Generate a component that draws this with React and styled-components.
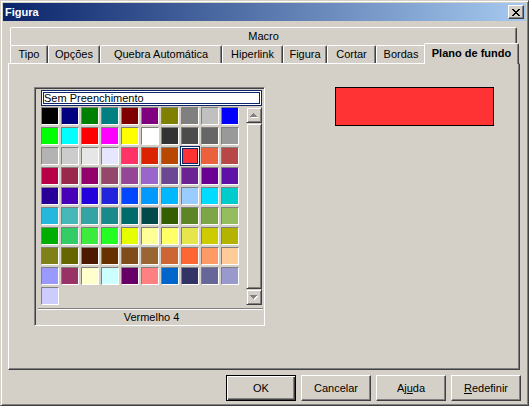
import React from 'react';
import styled, { createGlobalStyle } from 'styled-components';

const Global = createGlobalStyle`
  html, body { margin: 0; padding: 0; background: #d4d0c8; }
  body { font-family: "Liberation Sans", Arial, sans-serif; font-size: 11px; color: #000; }
`;

const FACE = '#d4d0c8';
const NAVY = '#0a246a';

const Window = styled.div`
  width: 529px;
  height: 406px;
  box-sizing: border-box;
  background: ${FACE};
  border: 1px solid;
  border-color: ${FACE} #404040 #404040 ${FACE};
  box-shadow: inset 1px 1px #fff, inset -1px -1px #808080;
  padding: 2px;
  display: flex;
  flex-direction: column;
`;

const TitleBar = styled.div`
  flex: none;
  height: 18px;
  display: flex;
  align-items: center;
  padding-left: 2px;
  background: linear-gradient(to right, #0a246a, #a6caf0);
`;

const Title = styled.span`
  color: #fff;
  font-weight: bold;
  font-size: 11px;
`;

const CloseButton = styled.div`
  margin-left: auto;
  margin-right: 2px;
  width: 16px;
  height: 14px;
  box-sizing: border-box;
  background: ${FACE};
  border: 1px solid;
  border-color: #fff #404040 #404040 #fff;
  box-shadow: inset -1px -1px #808080;
  display: flex;
  align-items: center;
  justify-content: center;
`;

const TabStrip = styled.div`
  margin-top: 6px;
  margin-left: 5px;
  display: flex;
  flex-direction: column;
`;

const TabRow = styled.div`
  display: flex;
  align-items: flex-start;
  height: 18px;
  padding-left: 2px;
`;

const Tab = styled.div`
  flex: none;
  box-sizing: border-box;
  width: ${p => p.$w}px;
  height: 18px;
  border: 1px solid;
  border-bottom: none;
  border-color: #fff #404040 transparent #fff;
  border-radius: 2px 2px 0 0;
  box-shadow: inset -1px 0 #808080;
  background: ${FACE};
  text-align: center;
  line-height: 17px;
  white-space: nowrap;
`;

const ActiveTab = styled(Tab)`
  position: relative;
  z-index: 1;
  width: ${p => p.$w + 4}px;
  height: 21px;
  margin: -2px -2px 0 -2px;
  padding-top: 1px;
  font-weight: bold;
`;

const Panel = styled.div`
  box-sizing: border-box;
  width: 512px;
  height: 307px;
  margin-left: 5px;
  border: 1px solid;
  border-color: #fff #404040 #404040 #fff;
  box-shadow: inset -1px -1px #808080;
  padding: 23px 0 0 25px;
  display: flex;
  align-items: flex-start;
`;

const ColorFrame = styled.div`
  box-sizing: border-box;
  width: 231px;
  height: 239px;
  border: 1px solid;
  border-color: #808080 #fff #fff #808080;
  box-shadow: inset 1px 1px #404040, inset -1px -1px ${FACE};
  padding: 2px 2px 1px 6px;
  display: flex;
  flex-direction: column;
`;

const NoneField = styled.div`
  box-sizing: border-box;
  height: 16px;
  border: 1px solid ${NAVY};
  box-shadow: inset 0 0 0 1px #fff, inset 0 0 0 2px ${NAVY};
  background: #fff;
  padding-left: 2px;
  line-height: 14px;
  white-space: nowrap;
`;

const GridRow = styled.div`
  margin-top: 1px;
  display: flex;
  align-items: flex-start;
`;

const Grid = styled.div`
  display: grid;
  grid-template-columns: repeat(10, 18px);
  grid-auto-rows: 18px;
  gap: 2px;
  height: 198px;
  align-content: start;
`;

const Cell = styled.div`
  box-sizing: border-box;
  width: 18px;
  height: 18px;
  background: ${p => p.$c};
  border: 1px solid;
  border-color: #808080 #fff #fff #808080;
`;

const SelectedCell = styled.div`
  box-sizing: border-box;
  width: 18px;
  height: 18px;
  background: ${p => p.$c};
  border: 1px solid #fff;
  box-shadow: 0 0 0 1px ${NAVY}, inset 0 0 0 1px ${NAVY};
`;

const ScrollBar = styled.div`
  margin-left: auto;
  width: 16px;
  height: 198px;
  display: flex;
  flex-direction: column;
`;

const ScrollButton = styled.div`
  box-sizing: border-box;
  width: 16px;
  height: 16px;
  flex: none;
  background: ${FACE};
  border: 1px solid;
  border-color: ${FACE} #404040 #404040 ${FACE};
  box-shadow: inset 1px 1px #fff, inset -1px -1px #808080;
  display: flex;
  align-items: center;
  justify-content: center;
`;

const Thumb = styled(ScrollButton)`
  height: auto;
  flex: 1;
`;

const Separator = styled.div`
  margin: 3px -1px 0 -3px;
  height: 2px;
  box-sizing: border-box;
  border-top: 1px solid #808080;
  border-bottom: 1px solid #fff;
`;

const Status = styled.div`
  height: 14px;
  line-height: 14px;
  text-align: center;
  white-space: nowrap;
`;

const Preview = styled.div`
  box-sizing: border-box;
  margin-left: 70px;
  width: 159px;
  height: 39px;
  border: 1px solid #000;
  background: ${p => p.$c};
`;

const ButtonRow = styled.div`
  margin-top: 5px;
  display: flex;
  justify-content: flex-end;
  gap: 5px;
  padding-right: 5px;
`;

const Button = styled.div`
  box-sizing: border-box;
  width: 70px;
  height: 26px;
  display: flex;
  align-items: center;
  justify-content: center;
  background: ${FACE};
  border: 1px solid;
  border-color: ${p => (p.$default ? '#000' : '#fff #404040 #404040 #fff')};
  box-shadow: ${p =>
    p.$default
      ? 'inset 1px 1px #fff, inset -1px -1px #404040, inset -2px -2px #808080'
      : 'inset -1px -1px #808080'};
  white-space: nowrap;
`;

const CloseGlyph = () => (
  <svg width="8" height="7" viewBox="0 0 8 7" shapeRendering="crispEdges">
    <path
      fill="#000"
      d="M0 0h2v1H0z M6 0h2v1H6z M1 1h2v1H1z M5 1h2v1H5z M2 2h4v1H2z M3 3h2v1H3z M2 4h4v1H2z M1 5h2v1H1z M5 5h2v1H5z M0 6h2v1H0z M6 6h2v1H6z"
    />
  </svg>
);

const UP = 'M3 0h1v1H3z M2 1h3v1H2z M1 2h5v1H1z M0 3h7v1H0z';
const DOWN = 'M0 0h7v1H0z M1 1h5v1H1z M2 2h3v1H2z M3 3h1v1H3z';

const Arrow = ({ d }) => (
  <svg width="8" height="5" viewBox="0 0 8 5" shapeRendering="crispEdges">
    <path fill="#fff" d={d} transform="translate(1 1)" />
    <path fill="#808080" d={d} />
  </svg>
);

const COLORS = [
  '#000000', '#000080', '#008000', '#008080', '#800000', '#800080', '#808000', '#808080', '#c0c0c0', '#0000ff',
  '#00ff00', '#00ffff', '#ff0000', '#ff00ff', '#ffff00', '#ffffff', '#333333', '#4c4c4c', '#666666', '#999999',
  '#b3b3b3', '#cccccc', '#e6e6e6', '#e6e6ff', '#ff3366', '#dc2300', '#b84700', '#ff3333', '#eb613d', '#b84747',
  '#b80047', '#99284c', '#94006b', '#94476b', '#944794', '#9966cc', '#6b4794', '#6b2394', '#6b0094', '#5e11a6',
  '#280099', '#4700b8', '#2300dc', '#2323dc', '#0047ff', '#0099ff', '#00b8ff', '#99ccff', '#00dcff', '#00cccc',
  '#23b8dc', '#47b8b8', '#33a3a3', '#198a8a', '#006b6b', '#004a4a', '#355e00', '#5c8526', '#7da647', '#94bd5e',
  '#00ae00', '#33cc66', '#3deb3d', '#23ff23', '#e6ff00', '#ffff99', '#ffff66', '#e6e64c', '#cccc00', '#b3b300',
  '#808019', '#666600', '#4c1900', '#663300', '#804c19', '#996633', '#cc6633', '#ff6633', '#ff9966', '#ffcc99',
  '#9999ff', '#993366', '#ffffcc', '#ccffff', '#660066', '#ff8080', '#0066cc', '#333366', '#666699', '#9999cc',
  '#ccccff',
];

const SELECTED = 27;

const TABS = [
  { label: 'Tipo', w: 38 },
  { label: 'Opções', w: 52 },
  { label: 'Quebra Automática', w: 122 },
  { label: 'Hiperlink', w: 61 },
  { label: 'Figura', w: 44 },
  { label: 'Cortar', w: 49 },
  { label: 'Bordas', w: 50 },
];

export default function App() {
  return (
    <>
      <Global />
      <Window>
        <TitleBar>
          <Title>Figura</Title>
          <CloseButton>
            <CloseGlyph />
          </CloseButton>
        </TitleBar>
        <TabStrip>
          <TabRow>
            <Tab $w={507}>Macro</Tab>
          </TabRow>
          <TabRow>
            {TABS.map(t => (
              <Tab key={t.label} $w={t.w}>{t.label}</Tab>
            ))}
            <ActiveTab $w={91}>Plano de fundo</ActiveTab>
          </TabRow>
        </TabStrip>
        <Panel>
          <ColorFrame>
            <NoneField>Sem Preenchimento</NoneField>
            <GridRow>
              <Grid>
                {COLORS.map((c, i) =>
                  i === SELECTED ? <SelectedCell key={i} $c={c} /> : <Cell key={i} $c={c} />
                )}
              </Grid>
              <ScrollBar>
                <ScrollButton><Arrow d={UP} /></ScrollButton>
                <Thumb />
                <ScrollButton><Arrow d={DOWN} /></ScrollButton>
              </ScrollBar>
            </GridRow>
            <Separator />
            <Status>Vermelho 4</Status>
          </ColorFrame>
          <Preview $c={COLORS[SELECTED]} />
        </Panel>
        <ButtonRow>
          <Button $default>OK</Button>
          <Button>Cancelar</Button>
          <Button>Aj<u>u</u>da</Button>
          <Button><u>R</u>edefinir</Button>
        </ButtonRow>
      </Window>
    </>
  );
}
